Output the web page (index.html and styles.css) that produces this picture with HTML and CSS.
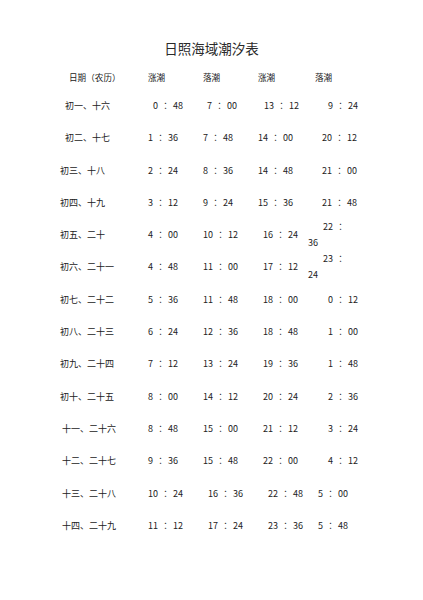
FILE: index.html
```html
<!DOCTYPE html>
<html lang="zh-CN">
<head>
<meta charset="utf-8">
<title>日照海域潮汐表</title>
<link rel="stylesheet" href="styles.css">
</head>
<body>
<div class="page">
  <h1 class="title">日照海域潮汐表</h1>
  <div class="table">
    <div class="row head">
      <div class="c o9 hd">日期（农历）</div>
      <div class="c hd">涨潮</div>
      <div class="c hd">落潮</div>
      <div class="c hd">涨潮</div>
      <div class="c o7 hd">落潮</div>
    </div>
    <div class="body">
      <div class="row">
        <div class="c o5">初一、十六</div>
        <div class="c o5">0 ： 48</div>
        <div class="c o4">7 ： 00</div>
        <div class="c o6">13 ： 12</div>
        <div class="c o20">9 ： 24</div>
      </div>
      <div class="row">
        <div class="c o5">初二、十七</div>
        <div class="c">1 ： 36</div>
        <div class="c">7 ： 48</div>
        <div class="c">14 ： 00</div>
        <div class="c o14">20 ： 12</div>
      </div>
      <div class="row">
        <div class="c">初三、十八</div>
        <div class="c">2 ： 24</div>
        <div class="c">8 ： 36</div>
        <div class="c">14 ： 48</div>
        <div class="c o14">21 ： 00</div>
      </div>
      <div class="row">
        <div class="c">初四、十九</div>
        <div class="c">3 ： 12</div>
        <div class="c">9 ： 24</div>
        <div class="c">15 ： 36</div>
        <div class="c o14">21 ： 48</div>
      </div>
      <div class="row">
        <div class="c">初五、二十</div>
        <div class="c">4 ： 00</div>
        <div class="c">10 ： 12</div>
        <div class="c o5">16 ： 24</div>
        <div class="c wrap"><span class="l1">22 ：</span><span class="l2">36</span></div>
      </div>
      <div class="row">
        <div class="c">初六、二十一</div>
        <div class="c">4 ： 48</div>
        <div class="c">11 ： 00</div>
        <div class="c o5">17 ： 12</div>
        <div class="c wrap"><span class="l1">23 ：</span><span class="l2">24</span></div>
      </div>
      <div class="row">
        <div class="c">初七、二十二</div>
        <div class="c">5 ： 36</div>
        <div class="c">11 ： 48</div>
        <div class="c o5">18 ： 00</div>
        <div class="c o20">0 ： 12</div>
      </div>
      <div class="row">
        <div class="c">初八、二十三</div>
        <div class="c">6 ： 24</div>
        <div class="c">12 ： 36</div>
        <div class="c o5">18 ： 48</div>
        <div class="c o20">1 ： 00</div>
      </div>
      <div class="row">
        <div class="c">初九、二十四</div>
        <div class="c">7 ： 12</div>
        <div class="c">13 ： 24</div>
        <div class="c o5">19 ： 36</div>
        <div class="c o20">1 ： 48</div>
      </div>
      <div class="row">
        <div class="c">初十、二十五</div>
        <div class="c">8 ： 00</div>
        <div class="c">14 ： 12</div>
        <div class="c o5">20 ： 24</div>
        <div class="c o20">2 ： 36</div>
      </div>
      <div class="row">
        <div class="c o2">十一、二十六</div>
        <div class="c">8 ： 48</div>
        <div class="c">15 ： 00</div>
        <div class="c o5">21 ： 12</div>
        <div class="c o20">3 ： 24</div>
      </div>
      <div class="row">
        <div class="c o2">十二、二十七</div>
        <div class="c">9 ： 36</div>
        <div class="c">15 ： 48</div>
        <div class="c o5">22 ： 00</div>
        <div class="c o20">4 ： 12</div>
      </div>
      <div class="row">
        <div class="c o2">十三、二十八</div>
        <div class="c">10 ： 24</div>
        <div class="c o5">16 ： 36</div>
        <div class="c o10">22 ： 48</div>
        <div class="c o10">5 ： 00</div>
      </div>
      <div class="row">
        <div class="c o2">十四、二十九</div>
        <div class="c">11 ： 12</div>
        <div class="c o5">17 ： 24</div>
        <div class="c o10">23 ： 36</div>
        <div class="c o10">5 ： 48</div>
      </div>
    </div>
  </div>
</div>
</body>
</html>
```
FILE: styles.css
```css
html, body {
  margin: 0;
  padding: 0;
  background: #ffffff;
}

body {
  font-family: "Noto Sans CJK SC", "Noto Sans", sans-serif;
  color: #222222;
}

.page {
  width: 423px;
  height: 600px;
  padding-top: 38px;
  box-sizing: border-box;
}

.title {
  margin: 0;
  height: 20px;
  line-height: 20px;
  font-size: 13.5px;
  font-weight: normal;
  text-align: center;
  color: #2a2a2a;
}

.table {
  padding-left: 60px;
  margin-top: 9px;
}

.row {
  display: grid;
  grid-template-columns: 88px 55px 55px 50px 70px;
  align-items: center;
  height: 32.3px;
}

.row.head {
  height: 20px;
}

.body {
  margin-top: 2.85px;
}

.c {
  font-size: 9px;
  line-height: 14px;
  white-space: nowrap;
}

.body .c:not(:first-child) {
  font-family: "Noto Sans CJK TC", "Noto Sans", sans-serif;
  word-spacing: 1px;
}

.hd {
  font-size: 8.6px;
}

.wrap .l1,
.wrap .l2 {
  display: block;
  line-height: 16px;
}

.wrap .l1 {
  padding-left: 15px;
}

.o2 { padding-left: 2px; }
.o4 { padding-left: 4px; }
.o5 { padding-left: 5px; }
.o6 { padding-left: 6px; }
.o7 { padding-left: 7px; }
.o9 { padding-left: 9px; }
.o10 { padding-left: 10px; }
.o14 { padding-left: 14px; }
.o20 { padding-left: 20px; }
```
